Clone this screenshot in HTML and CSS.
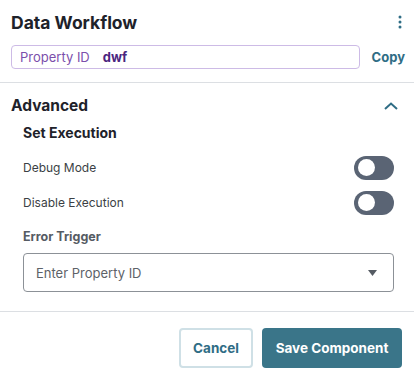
FILE: index.html
```html
<!DOCTYPE html>
<html>
<head>
    <title>Data Workflow</title>
    <meta charset="utf-8"/>
    <link rel="stylesheet" href="styles.css">
</head>
<body>
    <div class="panel">
        <div class="header">
            <h1 class="title">Data Workflow</h1>
            <svg class="kebab" width="4" height="14" viewBox="0 0 4 14">
                <circle cx="2" cy="2" r="1.5" fill="#2f6d85"/>
                <circle cx="2" cy="7" r="1.5" fill="#2f6d85"/>
                <circle cx="2" cy="12" r="1.5" fill="#2f6d85"/>
            </svg>
        </div>
        <div class="prop-row">
            <div class="prop-box">
                <span class="prop-label">Property ID</span>
                <span class="prop-value">dwf</span>
            </div>
            <span class="copy">Copy</span>
        </div>

        <div class="section">
            <div class="section-head">
                <h2>Advanced</h2>
                <svg width="14" height="8" viewBox="0 0 14 8">
                    <path d="M1 7 L7 1.5 L13 7" fill="none" stroke="#2f6d85" stroke-width="2"/>
                </svg>
            </div>
            <div class="group">
                <h3>Set Execution</h3>
                <div class="toggle-row">
                    <span>Debug Mode</span>
                    <div class="toggle"><div class="knob"></div></div>
                </div>
                <div class="toggle-row">
                    <span>Disable Execution</span>
                    <div class="toggle"><div class="knob"></div></div>
                </div>
                <div class="field-label">Error Trigger</div>
                <div class="select">
                    <span>Enter Property ID</span>
                    <svg width="9" height="6" viewBox="0 0 9 6">
                        <path d="M0 0 L9 0 L4.5 6 Z" fill="#555b63"/>
                    </svg>
                </div>
            </div>
        </div>

        <div class="footer">
            <button class="btn cancel">Cancel</button>
            <button class="btn save">Save Component</button>
        </div>
    </div>
</body>
</html>
```

FILE: styles.css
```css
body {
    margin: 0;
    background-color: #ffffff;
    font-family: Inter, "Noto Sans", sans-serif;
    color: #1e222a;
}

.panel {
    width: 414px;
}

.header {
    display: flex;
    align-items: center;
    justify-content: space-between;
    padding: 9px 11px 0 11px;
    height: 26px;
}

.title {
    margin: 0;
    font-size: 17.5px;
    font-weight: 700;
    color: #1e222a;
}

.kebab {
    margin-right: 1px;
}

.prop-row {
    display: flex;
    align-items: center;
    padding: 10px 9px 13px 11px;
    border-bottom: 1px solid #dcdfe3;
}

.prop-box {
    flex: 1;
    height: 22px;
    border: 1px solid #cdbbe6;
    border-radius: 4px;
    display: flex;
    align-items: center;
    padding-left: 8px;
    font-size: 13px;
}

.prop-label {
    color: #7b4fab;
}

.prop-value {
    color: #4b2680;
    font-weight: 700;
    margin-left: 13px;
}

.copy {
    margin-left: 12px;
    font-size: 13px;
    font-weight: 700;
    color: #2f6d85;
}

.section {
    padding: 13px 11px 19px 11px;
    border-bottom: 1px solid #dcdfe3;
}

.section-head {
    display: flex;
    align-items: center;
    justify-content: space-between;
    padding-right: 5px;
}

.section-head h2 {
    margin: 0;
    font-size: 15.5px;
    font-weight: 700;
    color: #1e222a;
}

.group {
    padding: 0 9px 0 12px;
}

.group h3 {
    margin: 9px 0 0 0;
    font-size: 14px;
    font-weight: 700;
    color: #1e222a;
}

.toggle-row {
    display: flex;
    align-items: center;
    justify-content: space-between;
    font-size: 12px;
    color: #3b3f45;
    height: 35px;
}

.toggle-row:first-of-type {
    margin-top: 9px;
}

.toggle {
    width: 40px;
    height: 24px;
    border-radius: 12px;
    background-color: #5a6474;
    display: flex;
    align-items: center;
    padding-left: 4px;
    box-sizing: border-box;
}

.knob {
    width: 17px;
    height: 17px;
    border-radius: 50%;
    background-color: #ffffff;
}

.field-label {
    margin-top: 9px;
    font-size: 12.5px;
    font-weight: 700;
    color: #555b63;
}

.select {
    margin-top: 9px;
    height: 37px;
    border: 1px solid #8c9197;
    border-radius: 4px;
    display: flex;
    align-items: center;
    justify-content: space-between;
    padding: 0 16px 0 12px;
    font-size: 13px;
    color: #5d6268;
}

.footer {
    display: flex;
    justify-content: flex-end;
    gap: 9px;
    padding: 16px 12px 0 0;
}

.btn {
    height: 40px;
    border-radius: 4px;
    font-family: Inter, "Noto Sans", sans-serif;
    font-size: 13.5px;
    font-weight: 700;
}

.cancel {
    width: 74px;
    background-color: #ffffff;
    border: 2px solid #cfe0e6;
    color: #2f6d85;
}

.save {
    width: 140px;
    background-color: #3a7589;
    border: none;
    color: #ffffff;
}
```
